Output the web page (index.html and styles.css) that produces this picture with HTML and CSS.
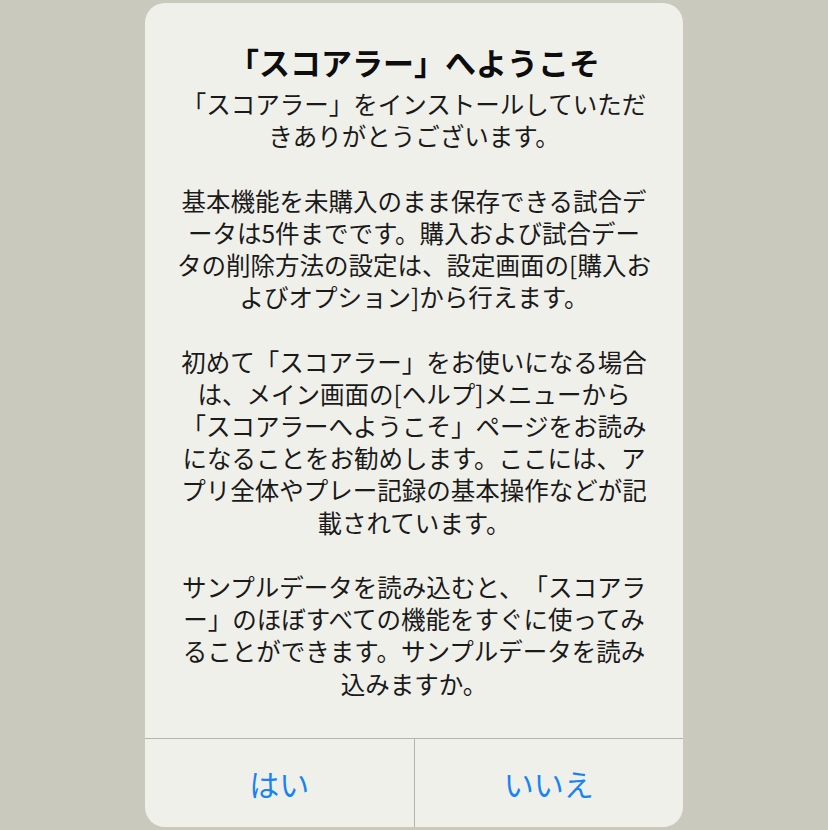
FILE: index.html
```html
<!DOCTYPE html>
<html lang="ja">
<head>
<meta charset="utf-8">
<title>スコアラー</title>
<link rel="stylesheet" href="styles.css">
</head>
<body>
<div class="screen">
  <div class="alert">
    <div class="alert-content">
      <h1 class="alert-title">「スコアラー」へようこそ</h1>
      <div class="alert-message">
        <p>「スコアラー」をインストールしていただ<br>きありがとうございます。</p>
        <p>基本機能を未購入のまま保存できる試合デ<br>ータは5件までです。購入および試合デー<br>タの削除方法の設定は、設定画面の[購入お<br>よびオプション]から行えます。</p>
        <p>初めて「スコアラー」をお使いになる場合<br>は、メイン画面の[ヘルプ]メニューから<br>「スコアラーへようこそ」ページをお読み<br>になることをお勧めします。ここには、ア<br>プリ全体やプレー記録の基本操作などが記<br>載されています。</p>
        <p>サンプルデータを読み込むと、「スコアラ<br>ー」のほぼすべての機能をすぐに使ってみ<br>ることができます。サンプルデータを読み<br>込みますか。</p>
      </div>
    </div>
    <div class="alert-actions">
      <button class="alert-button">はい</button>
      <button class="alert-button">いいえ</button>
    </div>
  </div>
</div>
</body>
</html>
```
FILE: styles.css
```css
html, body {
  margin: 0;
  padding: 0;
  background: #c9cabd;
}
body {
  font-family: "Noto Sans CJK JP", "Noto Sans", sans-serif;
  color: #111;
  text-spacing-trim: space-all;
}
.screen {
  width: 828px;
  height: 830px;
  padding-top: 3px;
  box-sizing: border-box;
  display: flex;
  justify-content: center;
  align-items: flex-start;
}
.alert {
  width: 538px;
  height: 824px;
  background: #f0f0eb;
  border-radius: 20px;
  overflow: hidden;
  display: flex;
  flex-direction: column;
}
.alert-content {
  flex: 1;
  padding: 41px 20px 0;
  text-align: center;
}
.alert-title {
  margin: 0;
  font-size: 31px;
  line-height: 36px;
  font-weight: 700;
  color: #0d0d0d;
  text-spacing-trim: space-all;
}
.alert-message {
  margin-top: 8px;
  font-size: 24.5px;
  line-height: 32.2px;
  color: #1a1a1a;
  white-space: nowrap;
  text-spacing-trim: space-all;
}
.alert-message p {
  margin: 32.2px 0 0;
}
.alert-message p:first-child {
  margin-top: 0;
}
.alert-actions {
  height: 88px;
  border-top: 1px solid #b5b5b0;
  display: flex;
}
.alert-button {
  flex: 1;
  margin: 0;
  padding: 0;
  border: none;
  background: transparent;
  font-family: "Noto Sans CJK JP", "Noto Sans", sans-serif;
  font-size: 30px;
  color: #1784f2;
  line-height: 1;
}
.alert-button + .alert-button {
  border-left: 1px solid #b5b5b0;
}
```
